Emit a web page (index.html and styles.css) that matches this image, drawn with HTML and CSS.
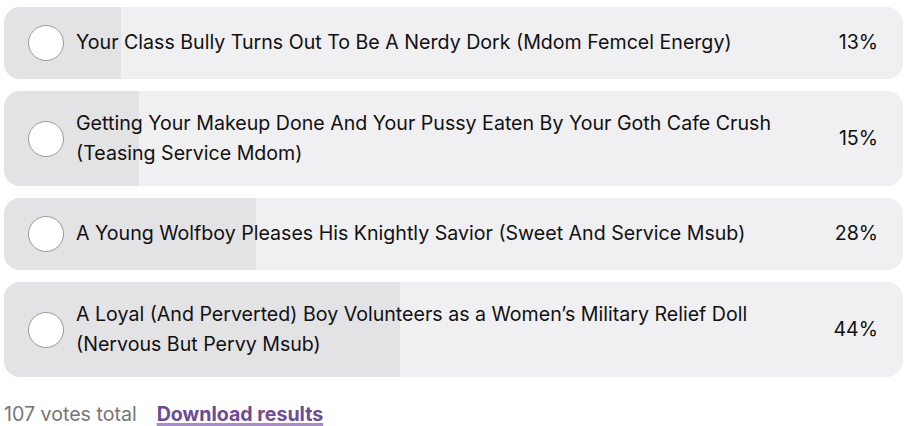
FILE: index.html
```html
<!DOCTYPE html>
<html>
<head>
<meta charset="utf-8">
<link rel="stylesheet" href="styles.css">
</head>
<body>
<div class="poll">
  <div class="option">
    <div class="fill" style="width:13%"></div>
    <span class="radio"></span>
    <span class="label">Your Class Bully Turns Out To Be A Nerdy Dork (Mdom Femcel Energy)</span>
    <span class="pct">13%</span>
  </div>
  <div class="option">
    <div class="fill" style="width:15%"></div>
    <span class="radio"></span>
    <span class="label">Getting Your Makeup Done And Your Pussy Eaten By Your Goth Cafe Crush (Teasing Service Mdom)</span>
    <span class="pct">15%</span>
  </div>
  <div class="option">
    <div class="fill" style="width:28%"></div>
    <span class="radio"></span>
    <span class="label">A Young Wolfboy Pleases His Knightly Savior (Sweet And Service Msub)</span>
    <span class="pct">28%</span>
  </div>
  <div class="option">
    <div class="fill" style="width:44%"></div>
    <span class="radio"></span>
    <span class="label">A Loyal (And Perverted) Boy Volunteers as a Women’s Military Relief Doll (Nervous But Pervy Msub)</span>
    <span class="pct">44%</span>
  </div>
  <div class="footer">
    <span class="total">107 votes total</span>
    <a class="download" href="#">Download results</a>
  </div>
</div>
</body>
</html>
```
FILE: styles.css
```css
html, body {
  margin: 0;
  padding: 0;
  background: #ffffff;
}
body {
  font-family: Inter, "Noto Sans", sans-serif;
  color: #111111;
}
.poll {
  padding: 7px 4px 0 4px;
  display: flex;
  flex-direction: column;
  gap: 12px;
}
.option {
  position: relative;
  overflow: hidden;
  background: #f0eff2;
  border-radius: 16px;
  display: flex;
  align-items: center;
  padding: 18px 25px 18px 24px;
  min-height: 36px;
}
.fill {
  position: absolute;
  left: 0;
  top: 0;
  bottom: 0;
  background: #e3e2e5;
}
.radio {
  position: relative;
  flex: none;
  width: 34px;
  height: 34px;
  border: 1px solid #9a9a9a;
  border-radius: 50%;
  background: #ffffff;
  margin-right: 12px;
}
.label {
  position: relative;
  flex: 1;
  font-size: 19.6px;
  line-height: 29.5px;
  padding-right: 40px;
}
.pct {
  position: relative;
  flex: none;
  font-size: 19.6px;
  line-height: 29.5px;
}
.footer {
  margin-top: 13px;
  display: flex;
  align-items: baseline;
  gap: 20px;
  font-size: 19.6px;
  line-height: 24px;
}
.total {
  color: #767676;
}
.download {
  color: #6d4c93;
  font-weight: 700;
  text-decoration-line: underline;
  text-decoration-color: #a88cc4;
  text-decoration-thickness: 3px;
  text-underline-offset: 2px;
}
```
